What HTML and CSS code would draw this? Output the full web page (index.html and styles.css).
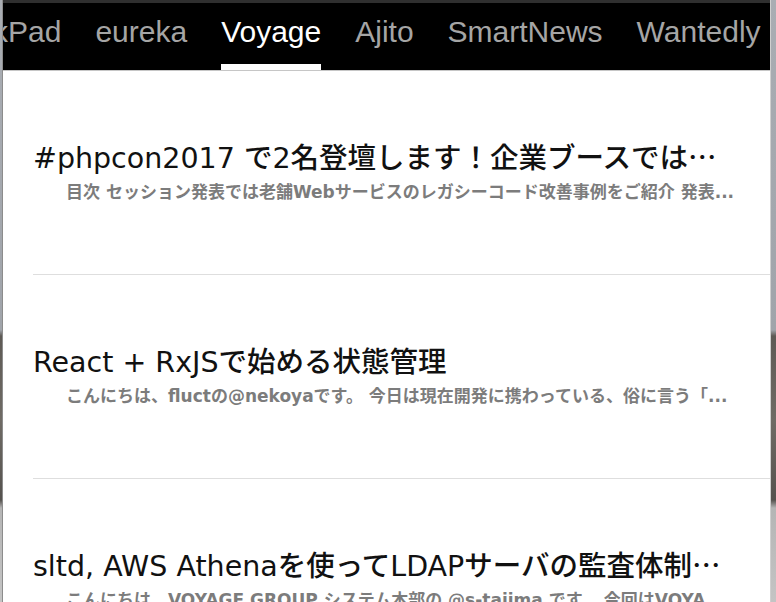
FILE: index.html
```html
<!DOCTYPE html>
<html lang="ja">
<head>
<meta charset="utf-8">
<title>Feeds</title>
<link rel="stylesheet" href="styles.css">
</head>
<body>
<div class="desktop">
  <div class="window">
    <div class="topstrip"></div>
    <nav class="tabs">
      <span class="tab first">kPad</span>
      <span class="tab">eureka</span>
      <span class="tab active">Voyage</span>
      <span class="tab">Ajito</span>
      <span class="tab">SmartNews</span>
      <span class="tab">Wantedly</span>
    </nav>
    <ul class="list">
      <li class="item">
        <div class="title">#phpcon2017 で2名登壇します！企業ブースでは<span class="ell">…</span></div>
        <div class="summary">目次 セッション発表では老舗Webサービスのレガシーコード改善事例をご紹介 発表...</div>
      </li>
      <li class="item">
        <div class="title">React + RxJSで始める状態管理</div>
        <div class="summary">こんにちは、fluctの@nekoyaです。 今日は現在開発に携わっている、俗に言う「...</div>
      </li>
      <li class="item">
        <div class="title">sltd, AWS Athenaを使ってLDAPサーバの監査体制<span class="ell">…</span></div>
        <div class="summary">こんにちは、VOYAGE GROUP システム本部の @s-tajima です。 今回はVOYA...</div>
      </li>
    </ul>
  </div>
</div>
</body>
</html>
```
FILE: styles.css
```css
html, body {
  margin: 0;
  padding: 0;
}

body {
  width: 776px;
  height: 602px;
  overflow: hidden;
}

.desktop {
  height: 602px;
  display: flex;
  background:
    linear-gradient(to bottom,
      #a9adb3 0px, #a0a4aa 330px,
      #5e5a55 336px, #6f6b65 420px, #55524e 500px,
      #b5b5b5 508px, #c4c4c4 602px);
}

.window {
  margin-left: 2px;
  width: 767px;
  height: 602px;
  border-left: 1px solid #8c8c8c;
  border-right: 1px solid #cfcfcf;
  background: #ffffff;
  overflow: hidden;
  display: flex;
  flex-direction: column;
}

.topstrip {
  height: 3px;
  background: #2f2f2f;
  flex: none;
}

.tabs {
  flex: none;
  height: 67px;
  background: #000000;
  border-bottom: 1px solid #c6c6c6;
  display: flex;
  gap: 34px;
  overflow: hidden;
  white-space: nowrap;
}

.tab {
  box-sizing: border-box;
  height: 67px;
  padding-top: 12px;
  font-family: "Liberation Sans", Arial, sans-serif;
  font-size: 30px;
  line-height: 34px;
  color: #a5a5a5;
  border-bottom: 6px solid transparent;
  flex: none;
}

.tab.first {
  margin-left: -10px;
}

.tab.active {
  color: #ffffff;
  border-bottom-color: #ffffff;
}

.list {
  list-style: none;
  margin: 0;
  padding: 0;
}

.item {
  box-sizing: border-box;
  height: 204px;
  margin-left: 30px;
  padding-top: 70px;
  border-bottom: 1px solid #dedede;
}

.title {
  font-family: "DejaVu Sans", "Noto Sans CJK JP", sans-serif;
  font-size: 28.5px;
  line-height: 36px;
  font-weight: 500;
  color: #111111;
  white-space: nowrap;
}

.ell {
  font-family: "Noto Sans CJK JP", sans-serif;
  line-height: 1;
}

.summary {
  margin-top: 4px;
  padding-left: 33px;
  padding-right: 20px;
  font-family: "DejaVu Sans", "Noto Sans CJK JP", sans-serif;
  font-size: 17px;
  line-height: 22px;
  font-weight: 700;
  color: #7c7c7c;
  white-space: nowrap;
  overflow: hidden;
}
```
